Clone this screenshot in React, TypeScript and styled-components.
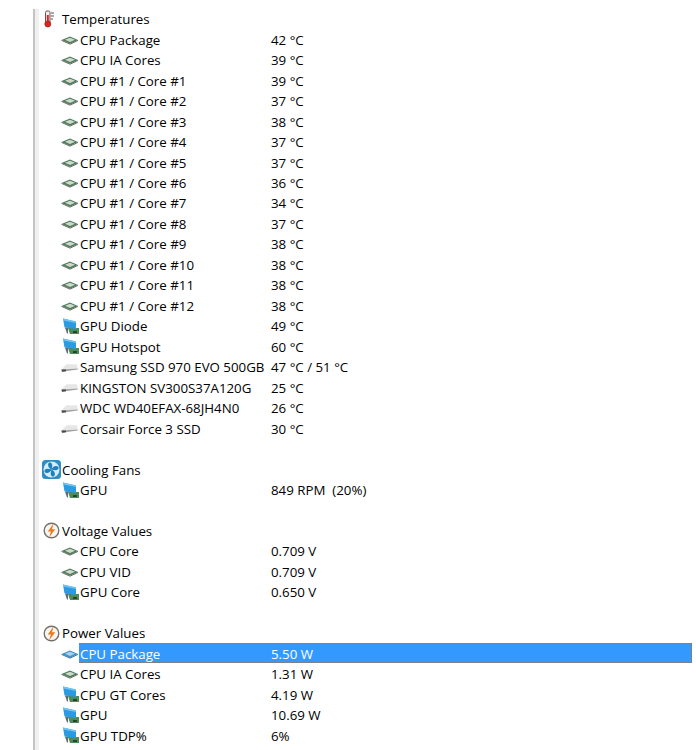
import styled, { createGlobalStyle } from "styled-components";

type IconKind = "thermo" | "fan" | "bolt" | "cpu" | "cpuSel" | "gpu" | "disk";

interface RowData {
  icon?: IconKind;
  label?: string;
  value?: string;
  group?: boolean;
  selected?: boolean;
}

const GlobalStyle = createGlobalStyle`
  html, body {
    margin: 0;
    padding: 0;
    background: #fff;
  }
`;

const Page = styled.div`
  width: 696px;
  height: 750px;
  overflow: hidden;
  box-sizing: border-box;
  padding: 9px 4px 0 33px;
  background: #fff;
  font-family: "Open Sans", "Noto Sans", sans-serif;
  font-size: 13.3px;
  color: #000;
`;

const Tree = styled.div`
  height: 741px;
  display: flex;
  flex-direction: column;
  border-left: 2px solid #c4c4c4;
  box-shadow: inset 4px 0 0 #f0f0f0;
`;

const Row = styled.div<{ $group?: boolean }>`
  height: 20.48px;
  flex: none;
  display: flex;
  align-items: center;
  padding-left: ${(p) => (p.$group ? "7px" : "25px")};
`;

const IconSlot = styled.span`
  width: 20px;
  height: 20px;
  flex: none;
  display: flex;
  align-items: center;
  justify-content: flex-start;
`;

const Content = styled.div`
  flex: 1;
  height: 100%;
  display: flex;
  align-items: center;
  box-sizing: border-box;
  margin-left: -1px;
  padding-left: 1px;
`;

const SelectedContent = styled(Content)`
  align-self: flex-start;
  height: 20.4px;
  margin-top: -1px;
  padding-top: 2px;
  background: #3399ff;
  border: 1px solid #808080;
  border-left: none;
  color: #fff;
`;

const Label = styled.span`
  width: 191px;
  flex: none;
  white-space: nowrap;
`;

const Value = styled.span`
  white-space: pre;
`;

const Thermo = () => (
  <svg width="16" height="18" viewBox="0 0 16 18">
    <rect x="3.5" y="1" width="4.5" height="12" rx="1.5" fill="#f4eeee" stroke="#6d5050" />
    <rect x="4.8" y="5" width="2" height="8" fill="#e0221e" />
    <circle cx="5.8" cy="14" r="3" fill="#e0221e" stroke="#8d2420" strokeWidth="0.7" />
    <path d="M9 3h3M9 6h3M9 9h2" stroke="#8a8a8a" strokeWidth="1.4" />
  </svg>
);

const Fan = () => (
  <svg width="19" height="19" viewBox="0 0 19 19">
    <rect width="19" height="19" rx="3.5" fill="#2f8cc4" />
    <circle cx="9.5" cy="9.5" r="8" fill="#d7ecf7" />
    <path
      d="M9.5 9.5C6 8 5.2 4.4 7 2.6c2.4-.8 4.5 1.4 2.5 6.9ZM9.5 9.5c1.5-3.5 5-4.3 6.9-2.5.8 2.4-1.4 4.5-6.9 2.5ZM9.5 9.5c3.5 1.5 4.3 5 2.5 6.9-2.4.8-4.5-1.4-2.5-6.9ZM9.5 9.5c-1.5 3.5-5 4.3-6.9 2.5-.8-2.4 1.4-4.5 6.9-2.5Z"
      fill="#1f80bb"
    />
  </svg>
);

const Bolt = () => (
  <svg width="18" height="17" viewBox="-1 0 18 17">
    <circle cx="8.5" cy="8.5" r="7.3" fill="#f7f5f2" stroke="#77706a" strokeWidth="1.4" />
    <path d="M10.5 1.5 4.8 9.4h3.1L6 15.6l6.2-8.3H9Z" fill="#ec7a1c" />
  </svg>
);

const Cpu = ({ selected }: { selected?: boolean }) => (
  <svg width="19" height="10" viewBox="-1 0 19 10">
    <path d="M0.5 5 9 1.5 17 5 9 8.8Z" fill={selected ? "#3f8fc4" : "#4e7d5c"} />
    <path d="M4 4.8 9 2.7 14 4.8 9 7Z" fill={selected ? "#a8d2ee" : "#cfd8cc"} />
    <path d="M0.5 5.4 9 9.2 17 5.4" fill="none" stroke={selected ? "#2a6c9c" : "#5c6058"} strokeWidth="0.9" />
  </svg>
);

const Gpu = () => (
  <svg width="20" height="17" viewBox="-3 0 20 17">
    <path d="M5 10h11v6H7Z" fill="#4f8a58" />
    <path d="M10 13h4v2h-4Z" fill="#26452c" />
    <path d="M0 0.5 13 3.5v7.5L1.5 9.5Z" fill="#2a9be2" />
    <path d="M0 0.5 13 3.5v1.6L0.4 2.5Z" fill="#73c4f2" />
    <path d="M2 9.7h3v5.8H4Z" fill="#5c6c78" />
  </svg>
);

const Disk = () => (
  <svg width="19" height="11" viewBox="-1 0 19 11">
    <path d="M0.5 7.5 5.5 2.2h10.5L16.8 6.4Z" fill="#e6e6e6" />
    <path d="M0.5 7.5 16.8 6.4V7.6L1 9.8Z" fill="#a2a2a4" />
    <path d="M0.5 7.5h4.5V9.2L1 9.8Z" fill="#4a4a4d" />
  </svg>
);

const renderIcon = (kind?: IconKind) => {
  if (kind === "thermo") return <Thermo />;
  if (kind === "fan") return <Fan />;
  if (kind === "bolt") return <Bolt />;
  if (kind === "cpu") return <Cpu />;
  if (kind === "cpuSel") return <Cpu selected />;
  if (kind === "gpu") return <Gpu />;
  if (kind === "disk") return <Disk />;
  return null;
};

const cpu = (label: string, value: string): RowData => ({ icon: "cpu", label, value });
const gpu = (label: string, value: string): RowData => ({ icon: "gpu", label, value });
const disk = (label: string, value: string): RowData => ({ icon: "disk", label, value });
const group = (icon: IconKind, label: string): RowData => ({ icon, label, group: true });

const rows: RowData[] = [
  group("thermo", "Temperatures"),
  cpu("CPU Package", "42 °C"),
  cpu("CPU IA Cores", "39 °C"),
  cpu("CPU #1 / Core #1", "39 °C"),
  cpu("CPU #1 / Core #2", "37 °C"),
  cpu("CPU #1 / Core #3", "38 °C"),
  cpu("CPU #1 / Core #4", "37 °C"),
  cpu("CPU #1 / Core #5", "37 °C"),
  cpu("CPU #1 / Core #6", "36 °C"),
  cpu("CPU #1 / Core #7", "34 °C"),
  cpu("CPU #1 / Core #8", "37 °C"),
  cpu("CPU #1 / Core #9", "38 °C"),
  cpu("CPU #1 / Core #10", "38 °C"),
  cpu("CPU #1 / Core #11", "38 °C"),
  cpu("CPU #1 / Core #12", "38 °C"),
  gpu("GPU Diode", "49 °C"),
  gpu("GPU Hotspot", "60 °C"),
  disk("Samsung SSD 970 EVO 500GB", "47 °C / 51 °C"),
  disk("KINGSTON SV300S37A120G", "25 °C"),
  disk("WDC WD40EFAX-68JH4N0", "26 °C"),
  disk("Corsair Force 3 SSD", "30 °C"),
  {},
  group("fan", "Cooling Fans"),
  gpu("GPU", "849 RPM  (20%)"),
  {},
  group("bolt", "Voltage Values"),
  cpu("CPU Core", "0.709 V"),
  cpu("CPU VID", "0.709 V"),
  gpu("GPU Core", "0.650 V"),
  {},
  group("bolt", "Power Values"),
  { icon: "cpuSel", label: "CPU Package", value: "5.50 W", selected: true },
  cpu("CPU IA Cores", "1.31 W"),
  gpu("CPU GT Cores", "4.19 W"),
  gpu("GPU", "10.69 W"),
  gpu("GPU TDP%", "6%"),
];

export default function App() {
  return (
    <Page>
      <GlobalStyle />
      <Tree>
        {rows.map((row, i) => {
          const Cell = row.selected ? SelectedContent : Content;
          return (
            <Row key={i} $group={row.group}>
              {row.icon && <IconSlot>{renderIcon(row.icon)}</IconSlot>}
              {row.label && (
                <Cell>
                  <Label>{row.label}</Label>
                  {row.value && <Value>{row.value}</Value>}
                </Cell>
              )}
            </Row>
          );
        })}
      </Tree>
    </Page>
  );
}
